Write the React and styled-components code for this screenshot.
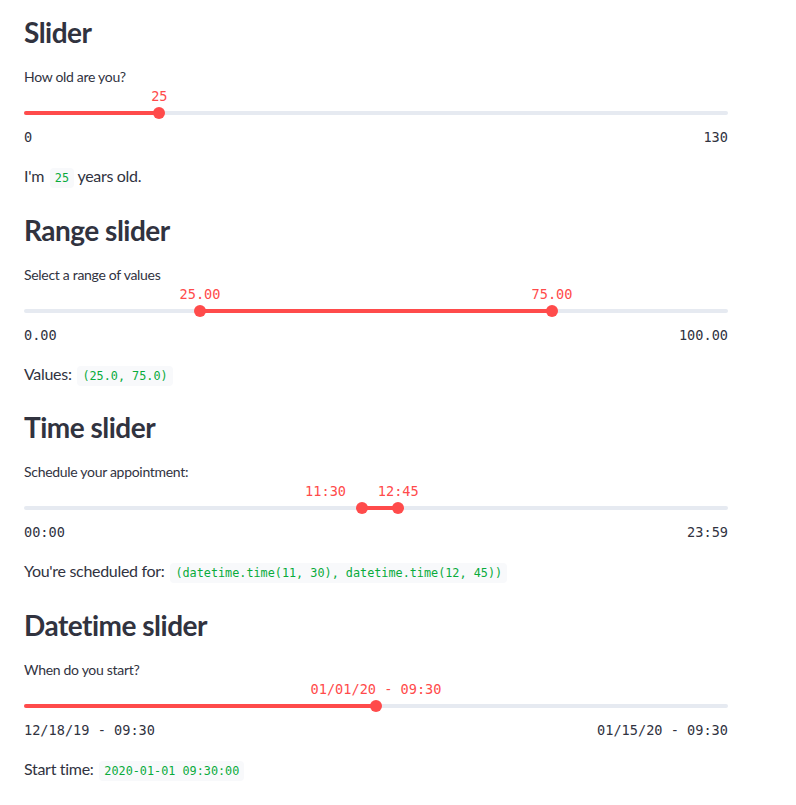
import React from 'react';
import styled, { createGlobalStyle } from 'styled-components';

const GlobalStyle = createGlobalStyle`
    body {
        margin: 0;
        background: #fff;
        color: #31333f;
        font-family: Lato, "Noto Sans", sans-serif;
    }
`;

const Page = styled.main`
    width: 704px;
    padding: 15px 24px 0 24px;
`;

const Section = styled.section`
    margin-bottom: 22.7px;
`;

const Heading = styled.h2`
    font-size: 28px;
    line-height: 34px;
    font-weight: 700;
    letter-spacing: -0.5px;
    margin: 0 0 18px 0;
    color: #31333f;
`;

const Label = styled.div`
    font-size: 14px;
    line-height: 20px;
    letter-spacing: -0.3px;
`;

const SliderBody = styled.div`
    padding-top: 24px;
`;

const Track = styled.div`
    position: relative;
    height: 4px;
    border-radius: 2px;
    background: #e6eaf1;
`;

const Fill = styled.div`
    position: absolute;
    top: 0;
    bottom: 0;
    border-radius: 2px;
    background: #ff4b4b;
`;

const Thumb = styled.div`
    position: absolute;
    top: -4px;
    width: 12px;
    height: 12px;
    margin-left: -6px;
    border-radius: 50%;
    background: #ff4b4b;
`;

const ThumbValue = styled.span`
    position: absolute;
    bottom: calc(100% + 1px);
    left: 50%;
    white-space: nowrap;
    font-family: "DejaVu Sans Mono", "Liberation Mono", monospace;
    font-size: 13.6px;
    line-height: 20px;
    color: #ff4b4b;
`;

const Ticks = styled.div`
    display: flex;
    justify-content: space-between;
    margin-top: 12px;
    font-family: "DejaVu Sans Mono", "Liberation Mono", monospace;
    font-size: 13.6px;
    line-height: 20px;
    color: #31333f;
`;

const Text = styled.p`
    margin: 17px 0 0 0;
    font-size: 16px;
    line-height: 24px;
    letter-spacing: -0.3px;
`;

const Code = styled.code`
    font-family: "DejaVu Sans Mono", "Liberation Mono", monospace;
    font-size: 11.8px;
    letter-spacing: 0;
    color: #09ab3b;
    background: #f8f9fb;
    padding: 3px 5px;
    border-radius: 4px;
    margin-left: 2px;
`;

const Slider = ({ label, min, max, values, display, shifts = [], minLabel, maxLabel }) => {
    const pct = v => ((v - min) / (max - min)) * 100;
    const from = values.length > 1 ? pct(values[0]) : 0;
    const to = pct(values[values.length - 1]);
    return (
        <div>
            <Label>{label}</Label>
            <SliderBody>
                <Track>
                    <Fill style={{ left: `${from}%`, width: `${to - from}%` }} />
                    {values.map((v, i) => (
                        <Thumb key={i} style={{ left: `${pct(v)}%` }}>
                            <ThumbValue style={{ transform: `translateX(calc(-50% + ${shifts[i] || 0}px))` }}>
                                {display[i]}
                            </ThumbValue>
                        </Thumb>
                    ))}
                </Track>
                <Ticks>
                    <span>{minLabel}</span>
                    <span>{maxLabel}</span>
                </Ticks>
            </SliderBody>
        </div>
    );
};

export default function App() {
    return (
        <>
            <GlobalStyle />
            <Page>
                <Section>
                    <Heading>Slider</Heading>
                    <Slider label="How old are you?" min={0} max={130} values={[25]}
                        display={['25']} minLabel="0" maxLabel="130" />
                    <Text>I'm <Code>25</Code> years old.</Text>
                </Section>
                <Section>
                    <Heading>Range slider</Heading>
                    <Slider label="Select a range of values" min={0} max={100} values={[25, 75]}
                        display={['25.00', '75.00']} minLabel="0.00" maxLabel="100.00" />
                    <Text>Values: <Code>(25.0, 75.0)</Code></Text>
                </Section>
                <Section>
                    <Heading>Time slider</Heading>
                    <Slider label="Schedule your appointment:" min={0} max={1439} values={[690, 765]}
                        display={['11:30', '12:45']} shifts={[-36, 0]} minLabel="00:00" maxLabel="23:59" />
                    <Text>You're scheduled for: <Code>(datetime.time(11, 30), datetime.time(12, 45))</Code></Text>
                </Section>
                <Section>
                    <Heading>Datetime slider</Heading>
                    <Slider label="When do you start?" min={0} max={28} values={[14]}
                        display={['01/01/20 - 09:30']} minLabel="12/18/19 - 09:30" maxLabel="01/15/20 - 09:30" />
                    <Text>Start time: <Code>2020-01-01 09:30:00</Code></Text>
                </Section>
            </Page>
        </>
    );
}
